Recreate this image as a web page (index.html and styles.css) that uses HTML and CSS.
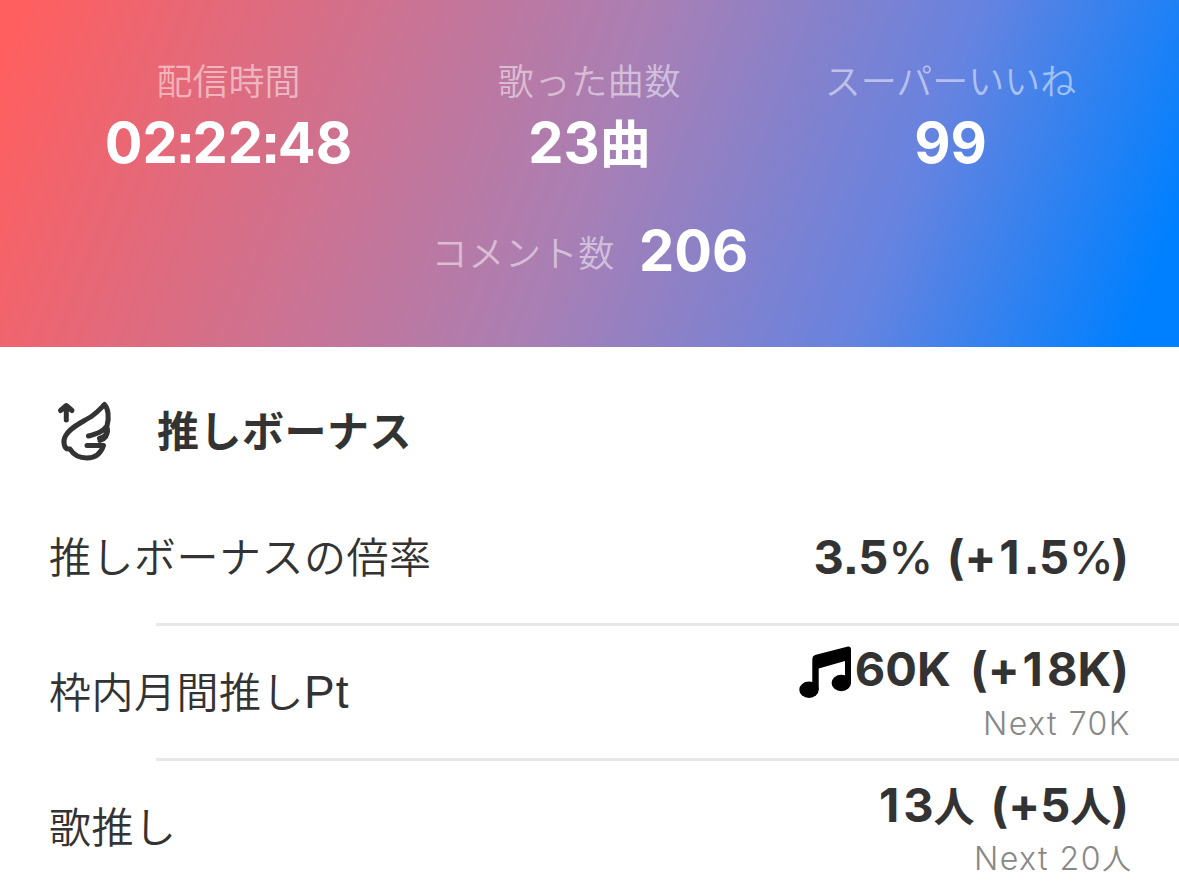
FILE: index.html
```html
<!DOCTYPE html>
<html lang="ja">
<head>
<meta charset="utf-8">
<title>配信結果</title>
<link rel="stylesheet" href="styles.css">
</head>
<body>
<header class="summary">
  <div class="stats">
    <div class="stat"><span class="label">配信時間</span><strong class="value">02<span class="colon">:</span>22<span class="colon">:</span>48</strong></div>
    <div class="stat"><span class="label spaced">歌った曲数</span><strong class="value">23<span class="songs">曲</span></strong></div>
    <div class="stat"><span class="label">スーパーいいね</span><strong class="value">99</strong></div>
  </div>
  <div class="comments"><span class="label spaced">コメント数</span><strong class="value">206</strong></div>
</header>
<main>
  <div class="heading">
    <svg class="wing" viewBox="0 0 60 64" fill="none" stroke="#333" stroke-width="5" stroke-linecap="round" stroke-linejoin="round"><path d="M10.300 22V8M4.500 12.500L10.300 7.500L16 12.500M8 11H12.500M12.500 51C8 51 6.500 43 9.500 38C14 29 27 24 36 18C42 14 45 10 48.500 6.500C52 10 53.500 19 51 28C47 34 40 36 32.500 38M51 29.500C53 35 49 39 43.500 40.500M47.500 47.500H31M47.500 47.500C45 55 40 60 31 60C23 60 17 56 14 51H12.500M51 31C52 38 48 41 44 42.500"/></svg>
    <h2>推しボーナス</h2>
  </div>
  <div class="row"><span class="name">推しボーナスの倍率</span><div class="result"><strong>3.5<span class="percent">%</span> (+<span class="one">1</span>.5<span class="percent">%</span>)</strong></div></div>
  <div class="row"><span class="name">枠内月間推し<span class="unit">Pt</span></span><div class="result"><strong><svg class="note" viewBox="0 0 54 54"><path d="M13.300 44V13Q13.300 10 16 9L49 .5Q52 0 52 3V37H46V15L19.700 22.500V44Z"/><ellipse cx="10" cy="43.800" rx="9.700" ry="8.200"/><ellipse cx="42.300" cy="37" rx="9.700" ry="8.200"/></svg><span class="points">60K</span> (+<span class="one">1</span>8K)</strong><small>Next 70K</small></div></div>
  <div class="row"><span class="name">歌推し</span><div class="result"><strong><span class="one">1</span>3<span class="people">人</span> (+5<span class="people">人</span>)</strong><small>Next 20<span class="people-small">人</span></small></div></div>
</main>
</body>
</html>
```
FILE: styles.css
```css
* { box-sizing: border-box; }
body { margin: 0; height: 892px; overflow: hidden; background: #fff; color: #333; font-family: "Noto Sans CJK JP", sans-serif; }
.summary { height: 347px; padding-top: 57px; color: #fff; background: linear-gradient(111deg, #ff5f5f 2%, #a97fb4 50%, #6683e0 75%, #0080ff 96%); }
.stats { display: grid; grid-template-columns: 361px 361px 361px; padding-left: 48px; }
.stat { display: flex; flex-direction: column; align-items: center; }
.label { font-family: "Noto Sans CJK JP DemiLight", "Noto Sans CJK JP", sans-serif; font-size: 36px; font-weight: 350; line-height: 44px; color: rgba(255,255,255,.5); white-space: nowrap; }
.spaced { letter-spacing: .7px; }
.value { font: 700 56px/84px Inter, "Noto Sans CJK JP", sans-serif; font-feature-settings: "calt" 0, "ss07" 1; white-space: pre; }
.colon { margin: 0 -2px; }
.songs { font-size: 51px; line-height: 1; }
.comments { display: flex; justify-content: center; align-items: center; gap: 24px; margin: 24px 0 0 1px; }
.heading { display: flex; align-items: center; height: 144px; padding: 22px 0 0 56px; gap: 41px; }
.wing { width: 60px; height: 64px; }
h2 { margin: -3px 0 0; font-size: 42px; line-height: 60px; letter-spacing: .5px; }
.row { display: flex; justify-content: space-between; align-items: center; height: 135px; padding: 0 50px 0 49px; background: linear-gradient(#e8e8e8, #e8e8e8) 156px 100% / 100% 3px no-repeat; }
.name { font-family: "Noto Sans CJK JP DemiLight", "Noto Sans CJK JP", sans-serif; font-size: 42px; font-weight: 350; letter-spacing: .5px; padding-bottom: 8px; }
.unit { font-family: "Liberation Sans", sans-serif; font-size: 46px; font-weight: 400; line-height: 1; letter-spacing: 1px; }
.result { display: flex; flex-direction: column; align-items: flex-end; }
.result strong { display: block; margin: -2px 0 2px; white-space: pre; font: 700 47px/60px Inter, "Noto Sans CJK JP", sans-serif; font-feature-settings: "calt" 0, "ss07" 1; word-spacing: 5px; }
.one { padding: 0 4px 0 3px; }
.percent { font-size: 45px; line-height: 1; font-weight: 500; letter-spacing: -2.5px; }
.people { font-size: 41px; line-height: 1; }
.points { margin-right: 3px; }
.note { width: 54px; height: 54px; margin-right: 2px; vertical-align: -14px; }
small { margin-right: -2px; font: 350 32px/44px Inter, "Noto Sans CJK JP DemiLight", "Noto Sans CJK JP", sans-serif; letter-spacing: 1.5px; color: #888; }
.people-small { font-size: 29px; line-height: 1; letter-spacing: 0; }
```
